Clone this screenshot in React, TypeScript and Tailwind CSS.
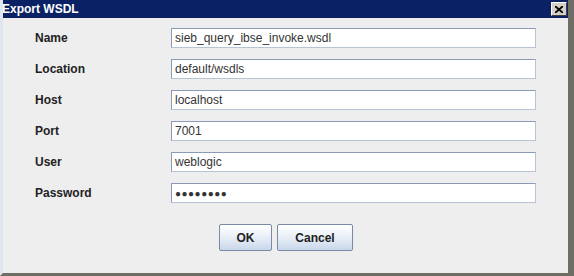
const fields = [
  { label: "Name", value: "sieb_query_ibse_invoke.wsdl" },
  { label: "Location", value: "default/wsdls" },
  { label: "Host", value: "localhost" },
  { label: "Port", value: "7001" },
  { label: "User", value: "weblogic" },
  { label: "Password", value: "●●●●●●●●", secret: true },
];

const App = () => {
  return (
    <div className="w-[574px] h-[276px] flex flex-col bg-[#eeeeee] font-['Liberation_Sans',Arial,sans-serif] overflow-hidden border-l-[3px] border-l-[#dfe6ee] border-r-[6px] border-r-[#6e6e64] border-b-[3px] border-b-[#6e6e64]">
      {/* Title bar */}
      <div className="h-[18px] bg-[#0a2163] flex items-center justify-between pl-[2px] pr-[1px] -ml-[3px]">
        <span className="text-white text-[12px] font-bold leading-none">Export WSDL</span>
        <div className="w-[16px] h-[14px] bg-[#d4d0c8] border border-t-white border-l-white border-r-[#404040] border-b-[#404040] flex items-center justify-center">
          <svg width="8" height="7" viewBox="0 0 8 7">
            <path d="M0 0 L8 7 M8 0 L0 7" stroke="#000" strokeWidth="1.8" />
          </svg>
        </div>
      </div>

      {/* Form */}
      <div className="flex flex-col gap-[11px] pt-[10px] pl-[32px] pr-[32px]">
        {fields.map((f) => (
          <div key={f.label} className="flex items-center">
            <span className="w-[136px] text-[12px] font-bold text-[#222]">{f.label}</span>
            <div className="flex-1 h-[20px] bg-white border border-[#8b9bb5] border-b-[#b8c3d4] border-r-[#b8c3d4] flex items-center px-[3px]">
              <span className={f.secret ? "text-[10px] tracking-[0.5px] text-[#333]" : "text-[12px] text-[#333]"}>{f.value}</span>
            </div>
          </div>
        ))}
      </div>

      {/* Buttons */}
      <div className="flex justify-center gap-[5px] mt-[21px] pl-[1px]">
        <button className="w-[53px] h-[27px] border border-[#7a8aa6] rounded-[2px] bg-gradient-to-b from-white via-[#e8eef7] to-[#c9d7ea] text-[12px] font-bold text-[#222]">OK</button>
        <button className="w-[76px] h-[27px] border border-[#7a8aa6] rounded-[2px] bg-gradient-to-b from-white via-[#e8eef7] to-[#c9d7ea] text-[12px] font-bold text-[#222]">Cancel</button>
      </div>
    </div>
  );
};

export default App;
